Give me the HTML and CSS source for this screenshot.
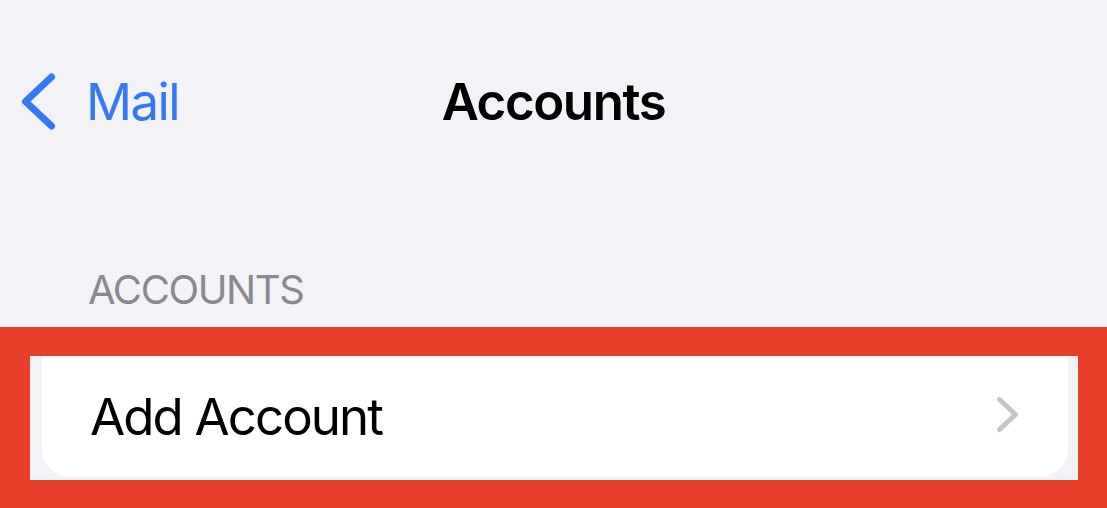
FILE: index.html
```html
<!DOCTYPE html>
<html lang="en">
<head>
    <meta charset="UTF-8">
    <meta name="viewport" content="width=device-width, initial-scale=1.0">
    <title>Accounts</title>
    <link rel="stylesheet" href="styles.css">
</head>
<body>
    <div class="navbar">
        <a class="back" href="#">
            <svg class="back-icon" width="40" height="60" viewBox="0 0 40 60">
                <path d="M33.5 5 L7.5 29.5 L33.5 54" />
            </svg>
            <span>Mail</span>
        </a>
        <h1 class="title">Accounts</h1>
        <span></span>
    </div>

    <div class="section-header">ACCOUNTS</div>

    <div class="highlight">
        <div class="group">
            <div class="cell">
                <span class="cell-label">Add Account</span>
                <svg class="chevron" width="25" height="41" viewBox="0 0 25 41">
                    <path d="M4.5 5.5 L20.5 20.5 L4.5 35.5" />
                </svg>
            </div>
        </div>
    </div>
</body>
</html>
```

FILE: styles.css
```css
body {
    font-family: 'Inter', 'Noto Sans', sans-serif;
    margin: 0;
    padding: 0;
    background-color: #F2F2F7; /* grouped background */
    overflow: hidden;
    height: 508px;
}

.navbar {
    display: grid;
    grid-template-columns: 1fr auto 1fr;
    align-items: start;
    padding-top: 72px;
    height: 60px;
}

.back {
    display: flex;
    align-items: flex-start;
    gap: 28px;
    padding-left: 18px;
    color: #3478F6;
    text-decoration: none;
    font-size: 51px;
    line-height: 60px;
    letter-spacing: -1.6px;
}

.back-icon path {
    fill: none;
    stroke: #3478F6;
    stroke-width: 7;
    stroke-linecap: round;
    stroke-linejoin: round;
}

.title {
    margin: 0;
    font-size: 51px;
    font-weight: 600;
    line-height: 60px;
    letter-spacing: -1.4px;
    color: #000;
}

.section-header {
    margin-top: 133.5px;
    padding-left: 88px;
    font-size: 40px;
    line-height: 48px;
    letter-spacing: -1.4px;
    color: #8A8A8E;
}

.highlight {
    margin-top: 13.5px;
    border-style: solid;
    border-color: #E8402A;
    border-width: 29px 29px 29px 30px;
    background-color: #F2F2F7;
    padding: 0 10px 3px 12px;
}

.group {
    background: white;
    border-radius: 0 0 28px 28px;
}

.cell {
    display: flex;
    justify-content: space-between;
    align-items: center;
    height: 121px;
    padding: 0 48px 0 48px;
}

.cell-label {
    font-size: 51px;
    line-height: 120px;
    letter-spacing: -1.9px;
    color: #000;
}

.chevron {
    margin-top: -4px;
}

.chevron path {
    fill: none;
    stroke: #C4C4C7;
    stroke-width: 5;
    stroke-linecap: round;
    stroke-linejoin: round;
}
```
